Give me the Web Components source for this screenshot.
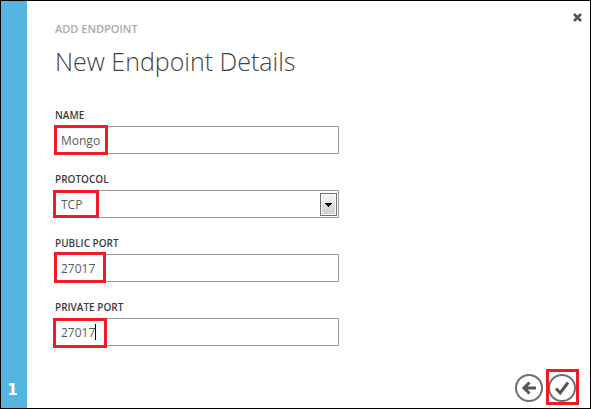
<!DOCTYPE html>
<html lang="en">
<head>
<meta charset="utf-8">
<title>Add Endpoint</title>
<style>
  html, body { height: 100%; margin: 0; }
  body { background: #fff; font-family: "Open Sans", "Noto Sans", sans-serif; }
</style>
</head>
<body>
<wizard-dialog step="1">
  <span slot="kicker">ADD ENDPOINT</span>
  <span slot="title">New Endpoint Details</span>
  <text-field label="NAME" value="Mongo" style="--mark-left:0px;--mark-top:-1px;--mark-width:54px;--mark-height:30px"></text-field>
  <select-field label="PROTOCOL" value="TCP" style="--mark-left:-1px;--mark-top:0px;--mark-width:46px;--mark-height:28px"></select-field>
  <text-field label="PUBLIC PORT" value="27017" style="--mark-left:0px;--mark-top:-2px;--mark-width:52px;--mark-height:31px"></text-field>
  <text-field label="PRIVATE PORT" value="27017" caret style="--mark-left:-1px;--mark-top:0px;--mark-width:54px;--mark-height:30px"></text-field>
  <round-button slot="actions" icon="back" label="Back"></round-button>
  <round-button slot="actions" icon="check" label="Complete" marked></round-button>
</wizard-dialog>

<script>
const fieldStyles = `
  :host { display: block; }
  label { display: block; font-size: 10px; font-weight: 600; line-height: 16px; color: #3c3c3c; margin-bottom: 3px; padding-left: 1px; }
  .box { position: relative; }
  input, select {
    display: block; box-sizing: border-box; width: 100%; height: 28px; margin: 0; padding: 0 6px;
    border: 1px solid #999; border-radius: 0; background: #fff; color: #5a5a5a;
    font: 12px "Open Sans", "Noto Sans", sans-serif; appearance: none; outline: 0;
  }
  .mark {
    position: absolute; box-sizing: border-box; pointer-events: none; border: 3px solid #ee1c24;
    left: var(--mark-left); top: var(--mark-top); width: var(--mark-width); height: var(--mark-height);
  }
`;

class TextField extends HTMLElement {
  connectedCallback() {
    const root = this.attachShadow({ mode: "open" });
    root.innerHTML = `<style>${fieldStyles}
      .caret { position: absolute; left: 41px; top: 6px; width: 1px; height: 16px; background: #000; }
    </style>
    <label for="control"></label>
    <div class="box"><input id="control" type="text"><span class="mark"></span>${this.hasAttribute("caret") ? '<span class="caret"></span>' : ""}</div>`;
    root.querySelector("label").textContent = this.getAttribute("label");
    root.querySelector("input").value = this.getAttribute("value");
  }
}

class SelectField extends HTMLElement {
  connectedCallback() {
    const root = this.attachShadow({ mode: "open" });
    root.innerHTML = `<style>${fieldStyles}
      .drop {
        position: absolute; right: 2px; top: 3px; bottom: 2px; width: 17px; box-sizing: border-box;
        border: 1px solid #707070; box-shadow: inset 0 0 0 1px #fafafa; pointer-events: none;
        background: linear-gradient(#f2f2f2, #ebebeb 48%, #dddddd 50%, #cfcfcf);
        display: grid; place-items: center;
      }
      svg { display: block; }
    </style>
    <label for="control"></label>
    <div class="box"><select id="control"><option></option></select>
      <span class="drop"><svg width="7" height="4" shape-rendering="crispEdges"><path d="M0 0h7v1H6v1H5v1H4v1H3V3H2V2H1V1H0z"/></svg></span>
      <span class="mark"></span></div>`;
    root.querySelector("label").textContent = this.getAttribute("label");
    root.querySelector("option").textContent = this.getAttribute("value");
  }
}

const icons = {
  back: '<path d="M21 14H9M14.5 8.5L9 14l5.500 5.500" fill="none" stroke="#555" stroke-width="3"/>',
  check: '<path d="M8 14.500l4.200 4.500L20 8.500" fill="none" stroke="#555" stroke-width="3"/>'
};

class RoundButton extends HTMLElement {
  connectedCallback() {
    const root = this.attachShadow({ mode: "open" });
    root.innerHTML = `<style>
      :host { display: block; position: relative; }
      button { display: block; padding: 0; border: 0; background: none; }
      svg { display: block; }
      .mark { position: absolute; inset: -5px -3px -3px -2px; border: 3px solid #ee1c24; pointer-events: none; }
    </style>
    <button type="button"><svg width="28" height="28" viewBox="0 0 28 28" aria-hidden="true">
      <circle cx="14" cy="14" r="13" fill="#fff" stroke="#707070" stroke-width="2"/>${icons[this.getAttribute("icon")]}</svg></button>
    ${this.hasAttribute("marked") ? '<span class="mark"></span>' : ""}`;
    root.querySelector("button").setAttribute("aria-label", this.getAttribute("label"));
  }
}

class WizardDialog extends HTMLElement {
  connectedCallback() {
    const root = this.attachShadow({ mode: "open" });
    root.innerHTML = `<style>
      :host { display: grid; grid-template-columns: 26px 1fr; box-sizing: border-box; min-height: 100%; border: 1px solid #000; background: #fff; }
      .rail { display: flex; align-items: flex-end; justify-content: center; background: #54b5e0; color: #fff;
        font: bold 15px/20px "DejaVu Sans", sans-serif; padding: 0 3px 8px 0; }
      main { display: flex; flex-direction: column; padding: 8px 14px 6px 27px; }
      .top { display: flex; justify-content: space-between; align-items: flex-start; }
      .kicker { font-size: 11px; font-weight: 600; line-height: 16px; color: #aaa; padding: 12px 0 0 1px; }
      .close { padding: 4px 0 2px; margin-right: -9px; width: 16px; border: 0; background: none; display: grid; place-items: center; }
      h1 { margin: 6px 0 0; padding-left: 1px; font-size: 25px; font-weight: 300; line-height: 36px; color: #444; }
      .fields { display: grid; gap: 17px; width: 50.5%; min-width: 285px; margin-top: 28px; }
      footer { display: flex; justify-content: flex-end; gap: 5px; margin-top: auto; }
    </style>
    <aside class="rail"><span></span></aside>
    <main>
      <div class="top"><div class="kicker"><slot name="kicker"></slot></div>
        <button class="close" type="button" aria-label="Close"><svg width="9" height="9" viewBox="0 0 9 9"><path d="M1 1l7 7M8 1L1 8" stroke="#555" stroke-width="2.600"/></svg></button></div>
      <h1><slot name="title"></slot></h1>
      <form class="fields"><slot></slot></form>
      <footer><slot name="actions"></slot></footer>
    </main>`;
    root.querySelector(".rail span").textContent = this.getAttribute("step");
  }
}

customElements.define("text-field", TextField);
customElements.define("select-field", SelectField);
customElements.define("round-button", RoundButton);
customElements.define("wizard-dialog", WizardDialog);
</script>
</body>
</html>
